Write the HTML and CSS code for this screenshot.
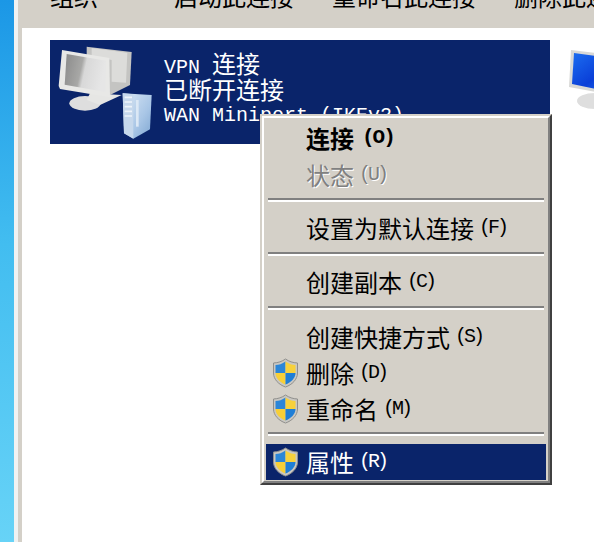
FILE: index.html
```html
<!DOCTYPE html>
<html>
	<head>
		<meta charset="utf-8">
		<title>网络连接</title>
		<link rel="stylesheet" href="styles.css">
	</head>
	<body>
		<svg class="defs" width="0" height="0">
			<defs>
				<linearGradient id="frontScreen" x1="0" y1="0" x2="1" y2="0.2">
					<stop offset="0" stop-color="#8a8a8a"/>
					<stop offset="0.45" stop-color="#a8a8a6"/>
					<stop offset="0.55" stop-color="#d8d8d8"/>
					<stop offset="1" stop-color="#e6e6e6"/>
				</linearGradient>
				<linearGradient id="towerFill" x1="0" y1="0" x2="1" y2="1">
					<stop offset="0" stop-color="#dbe8f5"/>
					<stop offset="0.6" stop-color="#a9c6e6"/>
					<stop offset="1" stop-color="#7ea6d2"/>
				</linearGradient>
				<linearGradient id="blueScreen" x1="0" y1="0" x2="1" y2="1">
					<stop offset="0" stop-color="#1c6df0"/>
					<stop offset="0.5" stop-color="#0a3fd8"/>
					<stop offset="1" stop-color="#2f8cf5"/>
				</linearGradient>
				<clipPath id="shieldClip">
					<path d="M13.5 3.5C10 6 7 7 3.5 7L3.5 15C3.5 20 8 24.5 13.5 26.5C19 24.5 23.5 20 23.5 15L23.5 7C20 7 17 6 13.5 3.5Z"/>
				</clipPath>
				<symbol id="shield" viewBox="0 0 27 30">
					<path d="M13.5 1C10 3.5 6 4.8 1.5 5L1.5 15C1.5 21.5 7 26.8 13.5 29C20 26.8 25.5 21.5 25.5 15L25.5 5C21 4.8 17 3.5 13.5 1Z" fill="#c9c7c2" stroke="#8f8f8c"/>
					<g clip-path="url(#shieldClip)">
						<rect x="2" y="2" width="11.5" height="13" fill="#2b86d8"/>
						<rect x="13.5" y="2" width="12" height="13" fill="#f7d13c"/>
						<rect x="2" y="15" width="11.5" height="14" fill="#f7cf38"/>
						<rect x="13.5" y="15" width="12" height="14" fill="#1f7ed6"/>
					</g>
				</symbol>
			</defs>
		</svg>

		<div class="desktop-edge"></div>
		<div class="window-edge"></div>
		<div class="window">
			<div class="toolbar">
				<span class="tool tool-org">组织</span>
				<span class="tool tool-start">启动此连接</span>
				<span class="tool tool-rename">重命名此连接</span>
				<span class="tool">删除此连接</span>
			</div>
			<div class="pane">
				<div class="tile">
					<svg class="tile-icon" viewBox="0 0 330 312">
						<!-- back monitor -->
						<path d="M110 20L245 36L240 135L180 165L110 120Z" fill="#c4c4c2"/>
						<path d="M125 24L232 38L228 128L185 125L185 60L125 48Z" fill="#dcdcda"/>
						<!-- stand -->
						<ellipse cx="105" cy="190" rx="47" ry="22" fill="#dedede"/>
						<path d="M120 160L215 165L150 195L110 180Z" fill="#e6e6e4"/>
						<!-- front monitor -->
						<path d="M36 30L178 54L180 172L30 147L26 138Z" fill="#e8e8e6"/>
						<path d="M50 42L168 62L166 156L44 134Z" fill="url(#frontScreen)"/>
						<!-- tower -->
						<path d="M218 160L305 165L300 268L250 296L222 280Z" fill="url(#towerFill)"/>
						<path d="M218 160L250 163L250 296L222 280Z" fill="#c6d8ec"/>
						<path d="M224 172H246M224 186H246M224 200H246M224 214H246M224 228H246" stroke="#eef4fa" stroke-width="5"/>
						<path d="M262 180L262 260" stroke="#dbe8f5" stroke-width="8"/>
					</svg>
					<div class="tile-text">
						<div class="tile-line"><span class="latin">VPN </span>连接</div>
						<div class="tile-line">已断开连接</div>
						<div class="tile-line latin">WAN Miniport (IKEv2)</div>
					</div>
				</div>
				<svg class="next-icon" viewBox="0 0 75 70">
					<path d="M2 0L60 7L60 48L0 37Z" fill="#d8d8d6"/>
					<path d="M5 3L58 10L57 45L3 34Z" fill="url(#blueScreen)"/>
					<ellipse cx="26" cy="51" rx="18" ry="8" fill="#dedede"/>
				</svg>
			</div>
		</div>

		<div class="menu">
			<div class="menu-inner">
				<div class="item item-default">连接<span class="key">(O)</span></div>
				<div class="item item-off">状态<span class="key">(U)</span></div>
				<div class="sep"></div>
				<div class="item">设置为默认连接<span class="key">(F)</span></div>
				<div class="sep sep-b"></div>
				<div class="item">创建副本<span class="key">(C)</span></div>
				<div class="sep sep-c"></div>
				<div class="item">创建快捷方式<span class="key">(S)</span></div>
				<div class="item"><svg class="shield"><use href="#shield"/></svg>删除<span class="key">(D)</span></div>
				<div class="item"><svg class="shield"><use href="#shield"/></svg>重命名<span class="key">(M)</span></div>
				<div class="sep"></div>
				<div class="item item-active"><svg class="shield"><use href="#shield"/></svg>属性<span class="key">(R)</span></div>
			</div>
		</div>
	</body>
</html>
```

FILE: styles.css
```css
html {
	height: 100%;
}
body {
	margin: 0;
	height: 542px;
	overflow: hidden;
	display: flex;
	background-color: #ffffff;
	font-family: "Noto Sans CJK SC", "Liberation Mono", sans-serif;
	font-size: 24px;
	color: #000000;
}
.defs {
	position: absolute;
}
.desktop-edge {
	width: 14px;
	background-image: linear-gradient(180deg, #1b97e6, #42bdf0 45%, #67d3f7);
	border-right: 4px solid #f0f2f2;
}
.window-edge {
	width: 4px;
	background-color: #d4d0c8;
}
.window {
	flex: 1;
	min-width: 0;
}

/* toolbar, only its lower edge is in the picture */
.toolbar {
	height: 28px;
	margin-left: -4px;
	padding: 0 0 20px 32px;
	box-sizing: border-box;
	display: flex;
	align-items: flex-end;
	background-color: #d4d0c8;
	line-height: 24px;
	white-space: nowrap;
	overflow: hidden;
}
.tool-org {
	margin-right: 76px;
}
.tool-start {
	margin-right: 38px;
}
.tool-rename {
	margin-right: 38px;
}

.pane {
	display: flex;
	padding: 12px 0 0 28px;
	overflow: hidden;
}
.tile {
	flex: none;
	width: 500px;
	height: 104px;
	display: flex;
	background-color: #0a246a;
	color: #ffffff;
}
.tile-icon {
	flex: none;
	width: 110px;
	height: 104px;
	filter: blur(0.4px);
}
.tile-text {
	padding: 10px 0 0 4px;
}
.tile-line {
	height: 26px;
	line-height: 26px;
	white-space: pre;
}
.tile-line.latin {
	margin-top: 1px;
}
.latin {
	font-family: "Liberation Mono", monospace;
	font-size: 20px;
}
.next-icon {
	flex: none;
	width: 75px;
	height: 70px;
	margin: 10px 0 0 19px;
	filter: blur(0.4px);
}

/* context menu */
.menu {
	position: absolute;
	left: 260px;
	top: 114px;
	width: 292px;
	height: 371px;
	box-sizing: border-box;
	border: 2px solid;
	border-color: #d4d0c8 #404040 #404040 #d4d0c8;
	background-color: #d4d0c8;
}
.menu-inner {
	height: 100%;
	box-sizing: border-box;
	padding: 2px 2px 0 2px;
	border: 2px solid;
	border-color: #ffffff #808080 #808080 #ffffff;
}
.item {
	height: 36px;
	display: flex;
	align-items: center;
	padding-left: 40px;
	line-height: 36px;
	white-space: nowrap;
}
.key {
	margin-left: 5px;
	font-family: "Liberation Mono", monospace;
	font-size: 20px;
	letter-spacing: -3px;
}
.item-default {
	font-weight: bold;
	margin-bottom: 1px;
}
.item-default .key {
	font-size: 21px;
	letter-spacing: -2px;
	margin-left: 8px;
}
.item-off {
	color: #808080;
	text-shadow: 1px 1px 0 #ffffff;
}
.item-active {
	background-color: #0a246a;
	color: #ffffff;
}
.shield {
	flex: none;
	width: 27px;
	height: 30px;
	margin: 0 7px 0 -34px;
	filter: blur(0.4px);
}
.sep {
	height: 17px;
	box-sizing: border-box;
	padding: 5px 2px 0;
}
.sep-b {
	height: 18px;
	padding-top: 6px;
}
.sep-c {
	height: 19px;
	padding-top: 6px;
}
.sep::before {
	content: "";
	display: block;
	height: 2px;
	background-color: #808080;
	border-bottom: 2px solid #ffffff;
}
```
